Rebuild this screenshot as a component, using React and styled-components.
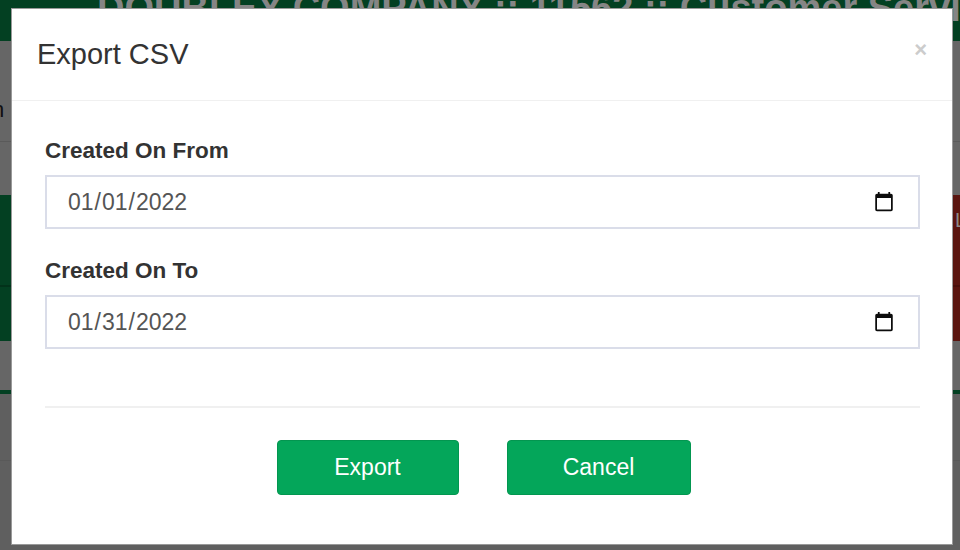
import React from "react";
import styled, { createGlobalStyle } from "styled-components";

const GlobalStyle = createGlobalStyle`
  html, body {
    margin: 0;
    padding: 0;
    height: 100%;
    overflow: hidden;
    font-family: "Liberation Sans", Arial, sans-serif;
  }
`;

const Page = styled.div`
  position: relative;
  width: 960px;
  height: 550px;
  overflow: hidden;
  background: #5f5f5f;
`;

const TopBar = styled.div`
  height: 41px;
  background: #034022;
  color: #858585;
  font-size: 38px;
  font-weight: 700;
  line-height: 16px;
  white-space: nowrap;
  padding-left: 97px;
  overflow: hidden;
`;

const NavRow = styled.div`
  height: 101px;
  display: flex;
  align-items: center;
  background: #666;
  border-bottom: 1px solid #5a5a5a;
  box-sizing: border-box;
  padding-top: 37px;
  color: #111;
  font-size: 22px;
  overflow: hidden;
`;

const NavText = styled.span`
  margin-left: -8px;
`;

const Spacer = styled.div`
  height: ${(p) => p.$h}px;
  background: ${(p) => p.$bg || "#666"};
`;

const Band = styled.div`
  height: 146px;
  display: flex;
`;

const BandCell = styled.div`
  background: ${(p) => p.$bg};
  flex: ${(p) => (p.$grow ? 1 : "none")};
  width: ${(p) => (p.$grow ? "auto" : "8px")};
  display: flex;
  flex-direction: column;
  color: #8a8a8a;
  font-size: 20px;
  overflow: hidden;
`;

const BandText = styled.div`
  height: 92px;
  box-sizing: border-box;
  padding: 14px 0 0 3px;
  border-bottom: 2px solid ${(p) => p.$line};
`;

const Strip = styled.div`
  height: 4px;
  background: #034022;
`;

const LowerRow = styled.div`
  height: 66px;
  background: #5f5f5f;
  border-bottom: 1px solid #595959;
`;

const Modal = styled.div`
  position: absolute;
  left: 12px;
  top: 9px;
  width: 940px;
  height: 535px;
  background: #fff;
  box-shadow: 0 0 0 1px #999;
  display: flex;
  flex-direction: column;
`;

const ModalHeader = styled.div`
  height: 92px;
  flex: none;
  box-sizing: border-box;
  border-bottom: 1px solid #f0f0f0;
  padding: 0 25px;
  display: flex;
  justify-content: space-between;
  align-items: center;
`;

const Title = styled.h4`
  margin: 0;
  font-size: 29px;
  font-weight: 400;
  color: #333;
`;

const CloseButton = styled.button`
  border: 0;
  background: none;
  padding: 0;
  margin: 0 0 9px 0;
  color: #ccc;
  font-family: inherit;
  font-size: 22px;
  font-weight: 700;
  line-height: 1;
`;

const ModalBody = styled.div`
  flex: 1;
  padding: 37px 32px 0 33px;
  display: flex;
  flex-direction: column;
`;

const Field = styled.div`
  margin-bottom: 29px;
`;

const Label = styled.label`
  display: block;
  font-size: 22.5px;
  line-height: 26px;
  font-weight: 700;
  color: #333;
  margin-bottom: 11px;
`;

const DateInput = styled.input`
  display: block;
  box-sizing: border-box;
  width: 100%;
  height: 54px;
  border: 2px solid #dadde9;
  border-radius: 0;
  background: #fff;
  padding: 0 22px 0 20px;
  font-family: inherit;
  font-size: 23px;
  color: #555;

  &::-webkit-calendar-picker-indicator {
    width: 22px;
    height: 22px;
    margin-right: 1px;
    padding: 0;
    opacity: 0.95;
  }
`;

const Divider = styled.hr`
  border: 0;
  border-top: 2px solid #f0f0f0;
  margin: 28px 0 32px;
  width: 100%;
`;

const Actions = styled.div`
  display: flex;
  justify-content: center;
  gap: 48px;
  padding-left: 2px;
`;

const ActionButton = styled.button`
  width: ${(p) => p.$w}px;
  height: 55px;
  box-sizing: border-box;
  background: #04a65a;
  border: 1px solid #039650;
  border-radius: 4px;
  color: #fff;
  font-family: inherit;
  font-size: 23px;
  padding: 0;
`;

export default function App() {
  return (
    <>
      <GlobalStyle />
      <Page>
        <TopBar>DOUBLEY COMPANY :: 11562 :: Customer Service</TopBar>
        <NavRow>
          <NavText>n</NavText>
        </NavRow>
        <Spacer $h={53} />
        <Band>
          <BandCell $grow $bg="#034022">
            <BandText $line="#02321a" />
          </BandCell>
          <BandCell $bg="#5a1510">
            <BandText $line="#4a100c">L</BandText>
          </BandCell>
        </Band>
        <Spacer $h={49} />
        <Strip />
        <LowerRow />
        <Modal>
          <ModalHeader>
            <Title>Export CSV</Title>
            <CloseButton>×</CloseButton>
          </ModalHeader>
          <ModalBody>
            <Field>
              <Label>Created On From</Label>
              <DateInput type="date" defaultValue="2022-01-01" />
            </Field>
            <Field>
              <Label>Created On To</Label>
              <DateInput type="date" defaultValue="2022-01-31" />
            </Field>
            <Divider />
            <Actions>
              <ActionButton $w={182}>Export</ActionButton>
              <ActionButton $w={184}>Cancel</ActionButton>
            </Actions>
          </ModalBody>
        </Modal>
      </Page>
    </>
  );
}
